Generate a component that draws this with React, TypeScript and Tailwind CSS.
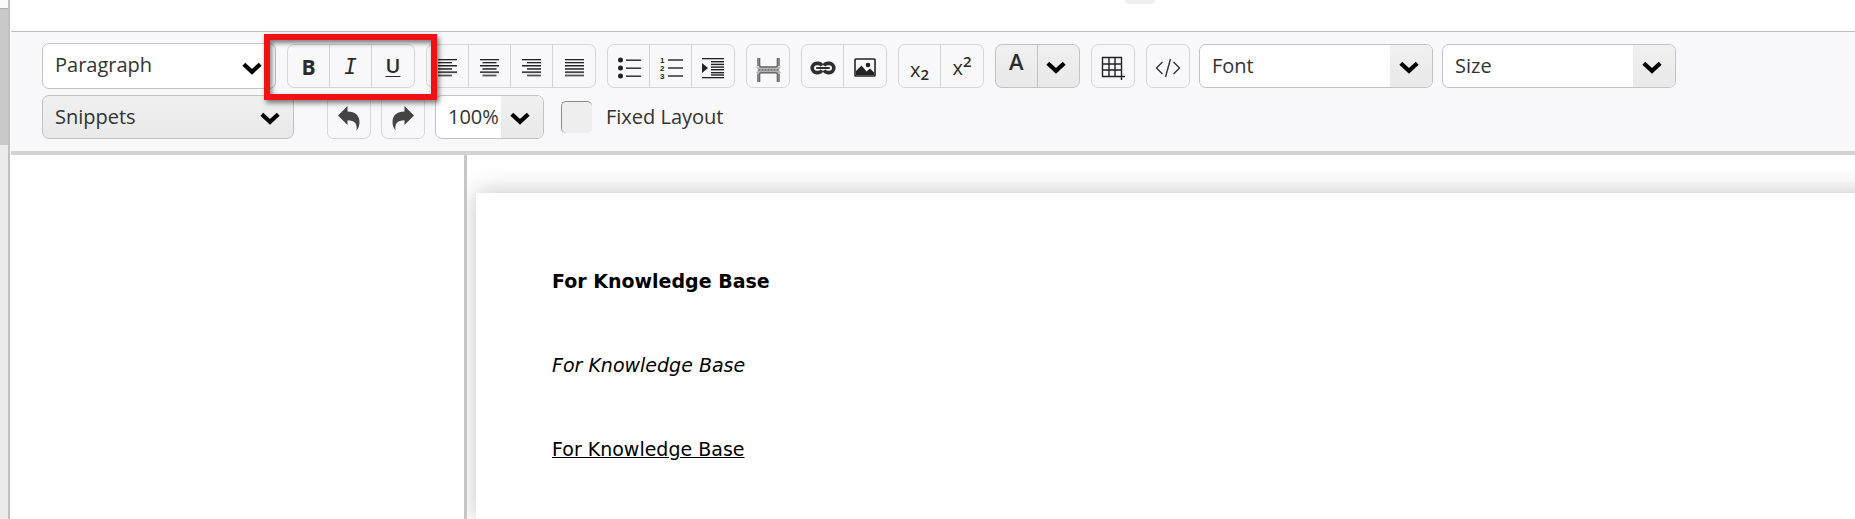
import React from "react";

type IconProps = { className?: string };

const Chevron = ({ className = "" }: IconProps) => (
  <svg viewBox="0 0 20 13" className={`h-[13px] w-5 ${className}`} aria-hidden="true">
    <path d="M1.8 2.2 10 9.8 18.2 2.2" fill="none" stroke="#000" strokeWidth="4.2" />
  </svg>
);

const LINES = [
  { y: 1, h: 1.3, fill: "#222" },
  { y: 4, h: 1.3, fill: "#222" },
  { y: 7, h: 1.5, fill: "#222" },
  { y: 10.2, h: 1.5, fill: "#222" },
  { y: 13.3, h: 1.8, fill: "#444" },
  { y: 16.6, h: 1.8, fill: "#555" },
];

const AlignIcon = ({ kind }: { kind: "left" | "center" | "right" | "justify" }) => (
  <svg viewBox="0 0 19 19" className="h-[19px] w-[19px]" aria-hidden="true">
    {LINES.map(({ y, h, fill }, i) => {
      const w = i % 2 === 1 && kind !== "justify" ? 14 : 19;
      const x = kind === "right" ? 19 - w : kind === "center" ? (19 - w) / 2 : 0;
      return <rect key={y} x={x} y={y} width={w} height={h} fill={fill} />;
    })}
  </svg>
);

const BulletsIcon = () => (
  <svg viewBox="0 0 24 22" className="h-[22px] w-6" aria-hidden="true">
    {[3, 11, 19].map((y) => (
      <g key={y} fill="#222">
        <circle cx="3.5" cy={y} r="2.5" />
        <rect x="9" y={y - 0.5} width="15" height="1.4" />
      </g>
    ))}
  </svg>
);

const NumbersIcon = () => (
  <svg viewBox="0 0 24 28" className="h-7 w-6" aria-hidden="true">
    {[6, 14, 22].map((y, i) => (
      <g key={y} fill="#222">
        <text x="1" y={y + 3} fontSize="8" fontWeight="700" fontFamily="Liberation Sans, sans-serif">
          {i + 1}
        </text>
        <rect x="9" y={y - 0.7} width="15" height="1.4" />
      </g>
    ))}
  </svg>
);

const IndentIcon = () => (
  <svg viewBox="0 0 22 22" className="h-[22px] w-[22px]" aria-hidden="true">
    <g fill="#222">
      <rect x="0" y="1" width="22" height="1.3" />
      <rect x="0" y="20" width="22" height="1.3" />
      {[4, 6.7, 9.4, 12, 15, 17.3].map((y) => (
        <rect key={y} x="9" y={y} width="13" height="1.4" />
      ))}
      <path d="M0 6 6 11 0 16Z" />
    </g>
  </svg>
);

const PageBreakIcon = () => (
  <svg viewBox="0 0 25 24" className="h-6 w-[25px]" aria-hidden="true">
    <g fill="#8a8a8a">
      <path d="M1 0H4.200V8H1ZM20.800 0H24V8H20.800ZM1 15.500H4.200V24H1ZM20.800 15.500H24V24H20.800Z" />
      <path d="M0 8.400H25L23 11.800 25 15.200H0L2 11.800Z" fill="#b5b5b5" />
    </g>
    <g fill="none" stroke="#6a6a6a" strokeWidth="1.400">
      <path d="M3.500 0V7Q3.500 9 5.500 9H19.500Q21.500 9 21.500 7V0" />
      <path d="M3.500 24V16.500Q3.500 14.800 5.500 14.800H19.500Q21.500 14.800 21.500 16.500V24" />
      <path d="M2.500 12H22.500" strokeDasharray="2 1" />
    </g>
  </svg>
);

const LinkIcon = () => (
  <svg viewBox="0 0 26 14" className="h-[14px] w-[26px]" aria-hidden="true">
    <g fill="none" stroke="#2e2e2e" strokeWidth="3.600">
      <path d="M12 4.600C11 3 9.600 2.400 8 2.400H6.800a4.600 4.600 0 0 0 0 9.200H8c1.600 0 3-.6 4-2.200" />
      <path d="M14 4.600C15 3 16.400 2.400 18 2.400h1.200a4.600 4.600 0 0 1 0 9.200H18c-1.600 0-3-.6-4-2.200" />
      <path d="M7 7H19" strokeLinecap="round" strokeWidth="2" />
    </g>
  </svg>
);

const PictureIcon = () => (
  <svg viewBox="0 0 22 19" className="h-[19px] w-[22px]" aria-hidden="true">
    <rect x="1" y="1" width="20" height="17" rx="0.8" fill="none" stroke="#222" strokeWidth="1.6" />
    <circle cx="14" cy="7" r="2.300" fill="#222" />
    <path d="M2 16.500V13L7.500 7.500 12.500 13.500 16 10.500 20 14.500V17H2Z" fill="#222" />
  </svg>
);

const TableIcon = () => (
  <svg viewBox="0 0 24 24" className="h-6 w-6" aria-hidden="true">
    <path
      d="M1.500 1.500H20.500V20.500H1.500ZM1.500 8H20.500M1.500 14H20.500M8 1.500V20.500M14 1.500V20.500"
      fill="none"
      stroke="#222"
      strokeWidth="1.400"
    />
    <path d="M17 17H24V24H17Z" fill="#f8f8fa" />
    <path d="M20.500 17V24M17 20.500H24" stroke="#222" strokeWidth="1.400" />
  </svg>
);

const CodeIcon = () => (
  <svg viewBox="0 0 26 20" className="h-5 w-[26px]" aria-hidden="true">
    <path
      d="M7.500 4 1.500 10 7.500 16M18.500 4 24.500 10 18.500 16M15.500 1 10.500 19"
      fill="none"
      stroke="#333"
      strokeWidth="1.400"
    />
  </svg>
);

const UndoIcon = ({ className = "" }: IconProps) => (
  <svg viewBox="0 0 22 25" className={`h-[25px] w-[22px] ${className}`} aria-hidden="true">
    <path
      d="M0 9.500 9.500 0V5.500C17 5.500 21.500 9.500 21.500 16 21.500 19.500 20.500 22 18.500 24.500 19.300 17.500 17 14.200 9.500 14.200V19Z"
      fill="#444"
    />
  </svg>
);

const Group = ({ children }: { children: React.ReactNode }) => (
  <div className="flex h-11 shrink-0 divide-x divide-[#d2d2d4] overflow-hidden rounded-[7px] border border-[#d6d6d8]">
    {children}
  </div>
);

const Tool = ({ label, children }: { label: string; children: React.ReactNode }) => (
  <button
    type="button"
    aria-label={label}
    className="flex h-full w-[42px] items-center justify-center pt-[3px] text-[#2b2b2b]"
  >
    {children}
  </button>
);

const arrowFill = "bg-linear-to-b from-[#f0f0f0] to-[#e9e9e9]";

const Picker = ({
  label,
  frame,
  select,
  arrow,
}: {
  label: string;
  frame: string;
  select: string;
  arrow: string;
}) => (
  <div className={`grid shrink-0 overflow-hidden rounded-[7px] border border-[#c2c2c4] ${frame}`}>
    <select
      aria-label={label}
      className={`col-start-1 row-start-1 w-full appearance-none bg-transparent ${select}`}
    >
      <option>{label}</option>
    </select>
    <span
      className={`pointer-events-none col-start-1 row-start-1 flex items-center justify-center justify-self-end ${arrow}`}
    >
      <Chevron />
    </span>
  </div>
);

const arrowCell = `h-full w-[42px] pr-1 pt-[2px] ${arrowFill}`;

export default function App() {
  return (
    <div className="flex min-h-screen overflow-hidden bg-white font-['Open_Sans',sans-serif] text-[20px] text-[#333]">
      <div className="flex w-2 shrink-0 flex-col bg-[#ebebeb]">
        <div className="h-2 bg-[#fbfbfb]" />
        <div className="h-[137px] border-t border-[#b0b0b0] bg-[#c9c9c9]" />
      </div>
      <div className="flex min-w-0 grow flex-col border-l-2 border-[#c0c0c0]">
        <header className="h-[31px] pl-[1115px]">
          <div className="h-1 w-[30px] rounded-b-[5px] bg-[#eeeeee]" />
        </header>

        <div
          role="toolbar"
          aria-label="Formatting"
          className="ml-px flex flex-col gap-[6px] border-t border-b-4 border-t-[#bdbdbd] border-b-[#d3d3d3] bg-[#f8f8fa] pt-[11px] pb-3 pl-[31px]"
        >
          <div className="flex items-center gap-[9px]">
            <div className="flex items-center gap-[11px]">
              <Picker
                label="Paragraph"
                frame="h-[46px] w-[234px] bg-white"
                select="pb-[2px] pl-3"
                arrow="mt-1 mr-3 w-[22px]"
              />
              <div className="relative">
                <Group>
                  <Tool label="Bold">
                    <span className="text-[21px] font-bold">B</span>
                  </Tool>
                  <Tool label="Italic">
                    <span className="pt-px font-['DejaVu_Sans_Mono',monospace] text-[21px] font-medium italic">I</span>
                  </Tool>
                  <Tool label="Underline">
                    <span className="-mt-1 text-[20px] font-semibold underline decoration-1 underline-offset-3">U</span>
                  </Tool>
                </Group>
                <div className="pointer-events-none absolute -top-[10px] -right-[22px] -bottom-3 -left-[23px] z-10 border-6 border-[#f01015] shadow-[2px_3px_5px_rgba(0,0,0,0.5),inset_2px_3px_5px_rgba(0,0,0,0.5)]" />
              </div>
              <Group>
                <Tool label="Align left"><AlignIcon kind="left" /></Tool>
                <Tool label="Align center"><AlignIcon kind="center" /></Tool>
                <Tool label="Align right"><AlignIcon kind="right" /></Tool>
                <Tool label="Justify"><AlignIcon kind="justify" /></Tool>
              </Group>
              <Group>
                <Tool label="Bulleted list"><BulletsIcon /></Tool>
                <Tool label="Numbered list"><NumbersIcon /></Tool>
                <Tool label="Indent"><IndentIcon /></Tool>
              </Group>
              <Group>
                <Tool label="Page break">
                  <span className="pt-1"><PageBreakIcon /></span>
                </Tool>
              </Group>
              <Group>
                <Tool label="Insert link"><LinkIcon /></Tool>
                <Tool label="Insert image"><PictureIcon /></Tool>
              </Group>
              <Group>
                <Tool label="Subscript">
                  <span className="pt-1">x<sub className="text-[15px] font-semibold">2</sub></span>
                </Tool>
                <Tool label="Superscript">
                  <span>x<sup className="text-[15px] font-semibold">2</sup></span>
                </Tool>
              </Group>
              <div className={`flex h-11 w-[85px] shrink-0 divide-x divide-[#c2c2c4] rounded-[7px] border border-[#c2c2c4] ${arrowFill}`}>
                <Tool label="Text color">
                  <span className="pb-3 text-[22px] font-semibold">A</span>
                </Tool>
                <Tool label="Text color options">
                  <span className="pr-1"><Chevron /></span>
                </Tool>
              </div>
              <Group>
                <Tool label="Insert table"><TableIcon /></Tool>
              </Group>
              <Group>
                <Tool label="Source code"><CodeIcon /></Tool>
              </Group>
            </div>
            <Picker label="Font" frame="h-11 w-[234px] bg-white" select="pl-3" arrow={arrowCell} />
            <Picker label="Size" frame="h-11 w-[234px] bg-white" select="pl-3" arrow={arrowCell} />
          </div>

          <div className="flex items-center gap-[10px]">
            <Picker label="Snippets" frame={`mr-[23px] h-11 w-[252px] ${arrowFill}`} select="pl-3" arrow="mt-[2px] mr-3 w-[22px]" />
            <Group>
              <Tool label="Undo"><UndoIcon /></Tool>
            </Group>
            <Group>
              <Tool label="Redo"><UndoIcon className="-scale-x-100" /></Tool>
            </Group>
            <Picker label="100%" frame="h-11 w-[109px] bg-white" select="pl-3" arrow={arrowCell} />
            <label className="ml-[7px] flex items-center gap-[14px]">
              <input
                type="checkbox"
                className="h-8 w-[31px] appearance-none rounded-[5px] border-t border-l border-[#8a8a8a] bg-[#eeeeee]"
              />
              Fixed Layout
            </label>
          </div>
        </div>

        <div className="ml-px flex grow">
          <aside className="w-[456px] shrink-0 border-r-3 border-[#c6c6c6]" />
          <main className="flex grow overflow-hidden bg-white pt-[38px] pl-[9px] font-['DejaVu_Sans',sans-serif]">
            <article className="-mr-8 flex grow flex-col gap-[60px] bg-white pt-[76px] pl-[76px] text-[19px] leading-6 text-black shadow-[0_0_24px_rgba(0,0,0,0.24)]">
              <p className="font-bold">For Knowledge Base</p>
              <p className="italic">For Knowledge Base</p>
              <p className="underline">For Knowledge Base</p>
            </article>
          </main>
        </div>
      </div>
    </div>
  );
}
